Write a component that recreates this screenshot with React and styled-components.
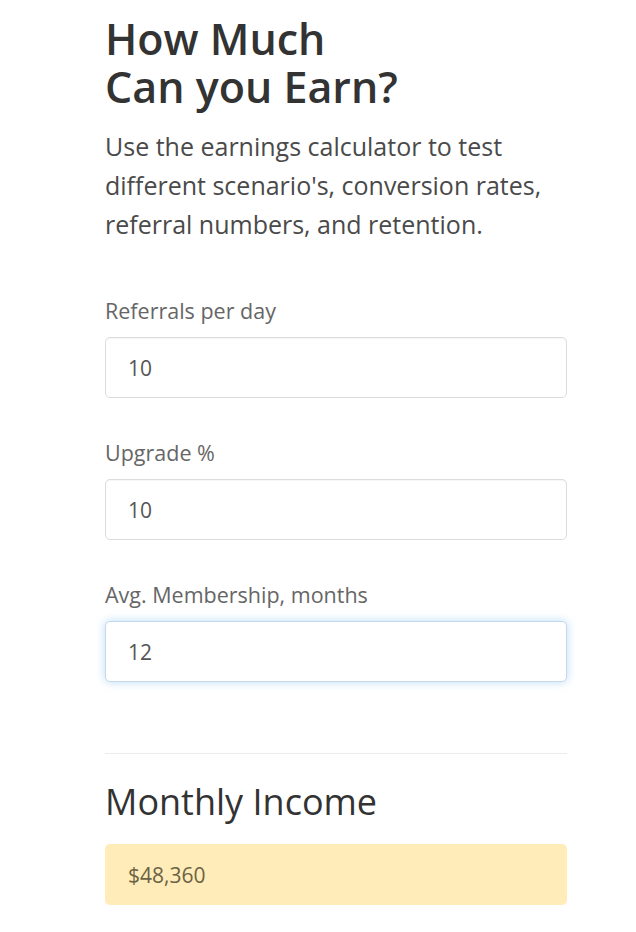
import React from "react"
import styled, { createGlobalStyle } from "styled-components"

const GlobalStyle = createGlobalStyle`
  body {
    margin: 0;
    background: #fff;
    font-family: "Open Sans", "Noto Sans", Arial, sans-serif;
  }
`

const Wrapper = styled.div`
  width: 462px;
  margin: 0 0 0 105px;
  padding-top: 15px;
`

const Title = styled.h1`
  margin: 0;
  font-size: 43px;
  line-height: 48px;
  font-weight: 600;
  color: #333;
`

const Lead = styled.p`
  margin: 16px 0 0;
  font-size: 25px;
  line-height: 39px;
  color: #4a4a4a;
`

const Form = styled.div`
  margin-top: 52px;
  display: flex;
  flex-direction: column;
  gap: 40px;
`

const Field = styled.div`
  display: flex;
  flex-direction: column;
  gap: 11px;
`

const Label = styled.label`
  font-size: 21.5px;
  line-height: 30px;
  color: #666;
`

const Input = styled.input`
  box-sizing: border-box;
  height: 61px;
  width: 100%;
  padding: 0 22px;
  font-family: inherit;
  font-size: 21px;
  color: #555;
  background: #fff;
  border: 1px solid ${(p) => (p.$focused ? "#c4d9ec" : "#dcdcdc")};
  border-radius: 5px;
  box-shadow: ${(p) =>
    p.$focused
      ? "0 0 10px rgba(102, 175, 233, 0.45)"
      : "inset 0 1px 1px rgba(0, 0, 0, 0.04)"};
  outline: none;
`

const Divider = styled.hr`
  margin: 71px 0 0;
  border: 0;
  border-top: 1px solid #ececec;
`

const ResultTitle = styled.h2`
  margin: 24px 0 0;
  font-size: 36px;
  line-height: 48px;
  font-weight: 400;
  color: #333;
`

const Result = styled.div`
  box-sizing: border-box;
  margin-top: 18px;
  height: 61px;
  display: flex;
  align-items: center;
  padding: 0 23px;
  font-size: 21px;
  color: #6b6345;
  background: #ffecb8;
  border-radius: 5px;
`

const fields = [
  { label: "Referrals per day", value: "10" },
  { label: "Upgrade %", value: "10" },
  { label: "Avg. Membership, months", value: "12", focused: true },
]

const App = () => (
  <>
    <GlobalStyle />
    <Wrapper>
      <Title>
        How Much
        <br />
        Can you Earn?
      </Title>
      <Lead>
        Use the earnings calculator to test different scenario's, conversion
        rates, referral numbers, and retention.
      </Lead>
      <Form>
        {fields.map((f) => (
          <Field key={f.label}>
            <Label>{f.label}</Label>
            <Input defaultValue={f.value} $focused={f.focused} readOnly />
          </Field>
        ))}
      </Form>
      <Divider />
      <ResultTitle>Monthly Income</ResultTitle>
      <Result>$48,360</Result>
    </Wrapper>
  </>
)

export default App
